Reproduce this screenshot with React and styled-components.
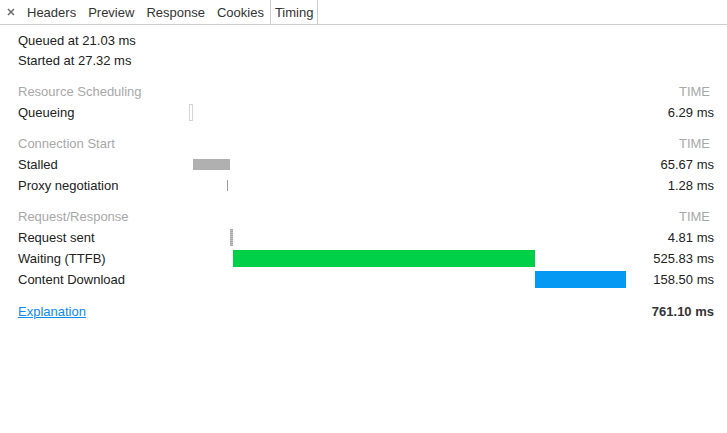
import React from "react";
import styled, { createGlobalStyle } from "styled-components";

const TOTAL = 761.1;

const sections = [
  {
    title: "Resource Scheduling",
    rows: [{ label: "Queueing", start: 0, dur: 6.29, kind: "queueing" }],
  },
  {
    title: "Connection Start",
    rows: [
      { label: "Stalled", start: 6.29, dur: 65.67, kind: "stalled" },
      { label: "Proxy negotiation", start: 66.0, dur: 1.28, kind: "proxy" },
    ],
  },
  {
    title: "Request/Response",
    rows: [
      { label: "Request sent", start: 71.96, dur: 4.81, kind: "sending" },
      { label: "Waiting (TTFB)", start: 76.77, dur: 525.83, kind: "waiting" },
      { label: "Content Download", start: 602.6, dur: 158.5, kind: "receiving" },
    ],
  },
];

const tabs = ["Headers", "Preview", "Response", "Cookies", "Timing"];

const GlobalStyle = createGlobalStyle`
  html, body {
    margin: 0;
    padding: 0;
    background: #fff;
  }
  body {
    font-family: "Liberation Sans", Arial, sans-serif;
    font-size: 13px;
    color: #222;
  }
`;

const Page = styled.div`
  width: 100%;
  min-height: 433px;
  background: #fff;
`;

const TabBar = styled.div`
  display: flex;
  align-items: stretch;
  height: 24px;
  border-bottom: 1px solid #cdcdcd;
`;

const CloseButton = styled.div`
  width: 21px;
  display: flex;
  align-items: center;
  justify-content: center;
`;

const Tab = styled.div`
  display: flex;
  align-items: center;
  padding: 0 ${(p) => (p.$selected ? "4px" : "5px")};
  color: #333;
  border-left: 1px solid ${(p) => (p.$selected ? "#cdcdcd" : "transparent")};
  border-right: 1px solid ${(p) => (p.$selected ? "#cdcdcd" : "transparent")};
`;

const Content = styled.div`
  padding: 6px 13px 0 18px;
`;

const Intro = styled.div`
  line-height: 20px;
`;

const Grid = styled.div`
  display: grid;
  grid-template-columns: 171px 437px 1fr;
  margin-top: ${(p) => p.$gap}px;
`;

const Cell = styled.div`
  height: 21px;
  line-height: 21px;
  white-space: nowrap;
`;

const SectionTitle = styled(Cell)`
  grid-column: span 2;
  color: #a8a8a8;
`;

const TimeHead = styled(Cell)`
  color: #a8a8a8;
  text-align: right;
  padding-right: 4px;
`;

const Time = styled(Cell)`
  text-align: right;
  font-weight: ${(p) => (p.$bold ? "bold" : "normal")};
  color: ${(p) => (p.$bold ? "#333" : "#222")};
`;

const Track = styled.div`
  height: 21px;
  display: flex;
  align-items: center;
`;

const barStyles = {
  queueing: "height: 17px; background: #fff; border: 1px solid #d4d4d4; box-sizing: border-box;",
  stalled: "height: 11px; background: #b0b0b0;",
  proxy: "height: 11px; background: #9e9e9e;",
  sending:
    "height: 17px; background: repeating-linear-gradient(180deg, #a6a6a6 0 1px, #c4c4c4 1px 2px);",
  waiting: "height: 17px; background: #00cf48;",
  receiving: "height: 17px; background: #0699f4;",
};

const Bar = styled.div`
  min-width: 1px;
  ${(p) => barStyles[p.$kind]}
`;

const Link = styled.a`
  color: #0a8bf5;
  text-decoration: underline;
  cursor: pointer;
`;

const CloseIcon = () => (
  <svg width="8" height="8" viewBox="0 0 8 8">
    <path d="M1 1 L7 7 M7 1 L1 7" stroke="#6e6e6e" strokeWidth="1.6" />
  </svg>
);

const pct = (v) => `${(v / TOTAL) * 100}%`;

const App = () => (
  <Page>
    <GlobalStyle />
    <TabBar>
      <CloseButton>
        <CloseIcon />
      </CloseButton>
      {tabs.map((t) => (
        <Tab key={t} $selected={t === "Timing"}>
          {t}
        </Tab>
      ))}
    </TabBar>
    <Content>
      <Intro>Queued at 21.03 ms</Intro>
      <Intro>Started at 27.32 ms</Intro>
      {sections.map((s) => (
        <Grid key={s.title} $gap={10}>
          <SectionTitle>{s.title}</SectionTitle>
          <TimeHead>TIME</TimeHead>
          {s.rows.map((r) => (
            <React.Fragment key={r.label}>
              <Cell>{r.label}</Cell>
              <Track>
                <Bar
                  $kind={r.kind}
                  style={{ marginLeft: pct(r.start), width: pct(r.dur) }}
                />
              </Track>
              <Time>{r.dur.toFixed(2)} ms</Time>
            </React.Fragment>
          ))}
        </Grid>
      ))}
      <Grid $gap={11}>
        <Cell>
          <Link>Explanation</Link>
        </Cell>
        <Cell />
        <Time $bold>761.10 ms</Time>
      </Grid>
    </Content>
  </Page>
);

export default App;
